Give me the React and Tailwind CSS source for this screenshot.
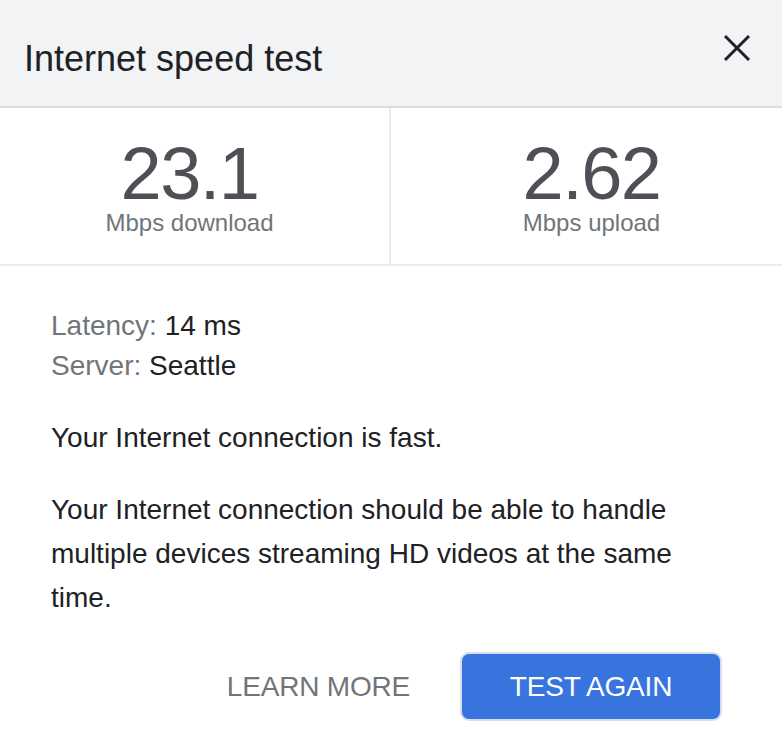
import React from "react";

const App = () => {
    return (
        <div className="w-[782px] h-[756px] bg-white overflow-hidden" style={{ fontFamily: "'Liberation Sans', Arial, sans-serif" }}>
            <div className="h-[108px] bg-[#f1f3f4] border-b-2 border-[#dadce0] flex items-center justify-between pl-[24px] pr-[30px]">
                <h1 className="text-[36px] leading-[40px] text-[#202124] pt-[12px]">Internet speed test</h1>
                <button className="w-[30px] h-[30px] flex items-center justify-center text-[#202124] mt-[-10px]">
                    <svg width="28" height="28" viewBox="0 0 28 28" fill="none" stroke="currentColor" strokeWidth="3" strokeLinecap="butt">
                        <path d="M2 2 L26 26 M26 2 L2 26" />
                    </svg>
                </button>
            </div>
            <div className="grid grid-cols-2 h-[158px] border-b-2 border-[#ececec]">
                <div className="flex flex-col items-center pt-[31px] pr-[10px] border-r-2 border-[#ececec]">
                    <div className="text-[74px] leading-[70px] text-[#4d5156] tracking-[-1.5px]">23.1</div>
                    <div className="text-[24px] text-[#70757a] leading-[28px]">Mbps download</div>
                </div>
                <div className="flex flex-col items-center pt-[31px] pl-[10px]">
                    <div className="text-[74px] leading-[70px] text-[#4d5156] tracking-[-1.5px]">2.62</div>
                    <div className="text-[24px] text-[#70757a] leading-[28px]">Mbps upload</div>
                </div>
            </div>
            <div className="pl-[51px] pr-[70px] pt-[40px] text-[28px] text-[#202124]">
                <div className="leading-[40px]"><span className="text-[#70757a]">Latency:</span> 14 ms</div>
                <div className="leading-[40px]"><span className="text-[#70757a]">Server:</span> Seattle</div>
                <p className="mt-[30px] leading-[44px]">Your Internet connection is fast.</p>
                <p className="mt-[28px] leading-[44px]">Your Internet connection should be able to handle multiple devices streaming HD videos at the same time.</p>
            </div>
            <div className="flex justify-end items-center gap-[50px] pr-[60px] mt-[32px]">
                <button className="text-[28px] text-[#70757a] tracking-[-0.2px]">LEARN MORE</button>
                <button className="w-[262px] h-[69px] rounded-[9px] bg-[#3874de] border-2 border-[#d6dff0] text-white text-[28px] tracking-[-0.2px]">TEST AGAIN</button>
            </div>
        </div>
    );
};

export default App;
